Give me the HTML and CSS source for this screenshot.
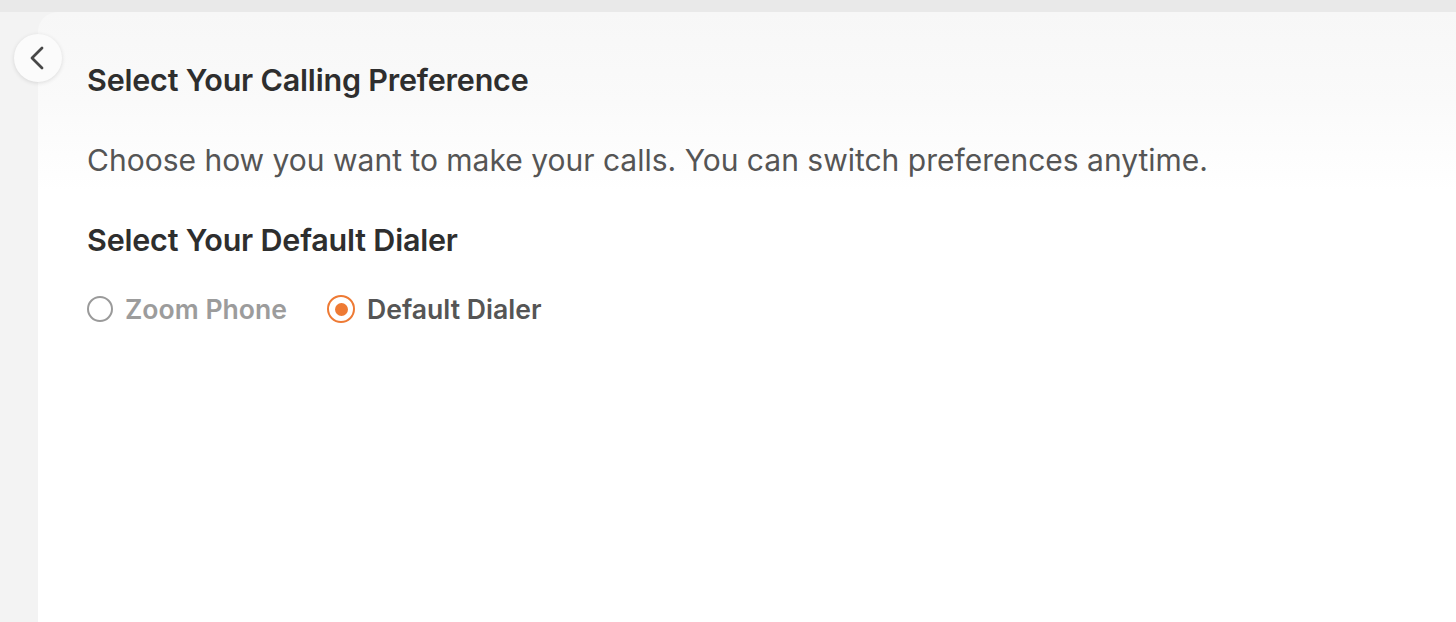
FILE: index.html
```html
<!DOCTYPE html>
<html lang="en">
<head>
<meta charset="utf-8">
<title>Calling Preference</title>
<link rel="stylesheet" href="styles.css">
</head>
<body>
<div class="topbar"></div>
<div class="layout">
  <div class="gutter"></div>
  <main class="card">
    <button class="back" aria-label="Back">
      <svg width="16" height="24" viewBox="0 0 16 24"><path d="M13 2 L3 12 L13 22" fill="none" stroke="#474747" stroke-width="2.8" stroke-linecap="round" stroke-linejoin="round"/></svg>
    </button>
    <h1 class="title">Select Your Calling Preference</h1>
    <p class="desc">Choose how you want to make your calls. You can switch preferences anytime.</p>
    <h2 class="title sub">Select Your Default Dialer</h2>
    <div class="options">
      <label class="option">
        <span class="radio"></span>
        <span class="opt-text muted">Zoom Phone</span>
      </label>
      <label class="option">
        <span class="radio checked"></span>
        <span class="opt-text">Default Dialer</span>
      </label>
    </div>
  </main>
</div>
</body>
</html>
```
FILE: styles.css
```css
* { box-sizing: border-box; }
html, body { margin: 0; height: 100%; }
body {
  background: #f3f3f3;
  font-family: "Inter", "Noto Sans", sans-serif;
  display: flex;
  flex-direction: column;
  overflow: hidden;
}
.topbar {
  height: 12px;
  background: #e9e9e9;
  flex: none;
}
.layout {
  flex: 1;
  display: flex;
}
.gutter {
  width: 38px;
  flex: none;
}
.card {
  position: relative;
  flex: 1;
  background: linear-gradient(#f7f7f7 0, #fafafa 90px, #ffffff 180px);
  border-top-left-radius: 20px;
  padding: 50px 0 0 49px;
}
.back {
  position: absolute;
  left: -24px;
  top: 22px;
  width: 48px;
  height: 48px;
  border-radius: 50%;
  border: none;
  background: #fbfbfb;
  box-shadow: 0 1px 4px rgba(0,0,0,0.12);
  display: flex;
  align-items: center;
  justify-content: center;
  padding: 0 2px 0 0;
}
.title {
  margin: 0;
  font-size: 30.5px;
  line-height: 36px;
  font-weight: 600;
  color: #2e2e2e;
  letter-spacing: -0.2px;
}
.desc {
  margin: 44px 0 0;
  font-size: 30px;
  line-height: 36px;
  color: #555;
  font-weight: 400;
}
.sub { margin-top: 44px; }
.options {
  display: flex;
  gap: 40px;
  margin-top: 33px;
}
.option {
  display: flex;
  align-items: center;
  gap: 12px;
}
.radio {
  width: 26px;
  height: 26px;
  border-radius: 50%;
  border: 2px solid #9a9a9a;
  display: flex;
  align-items: center;
  justify-content: center;
}
.radio.checked {
  width: 28px;
  height: 28px;
  border-color: #ee7a34;
}
.radio.checked::after {
  content: "";
  width: 13px;
  height: 13px;
  border-radius: 50%;
  background: #ee7a34;
}
.opt-text {
  font-size: 26.6px;
  line-height: 36px;
  font-weight: 600;
  color: #555;
}
.opt-text.muted { color: #9c9c9c; }
```
